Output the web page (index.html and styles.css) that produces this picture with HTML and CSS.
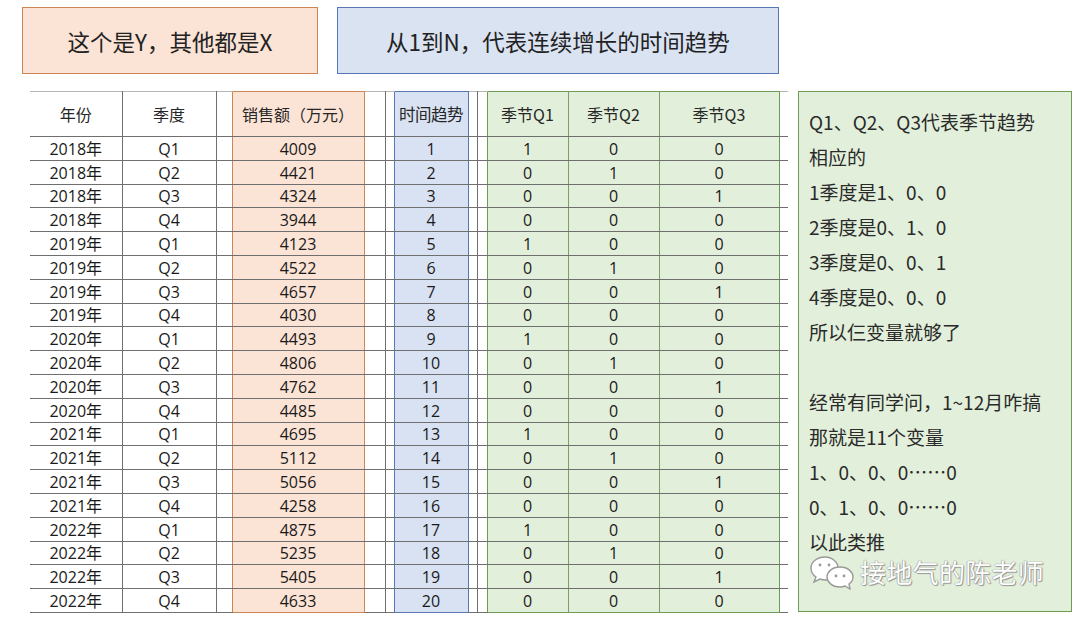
FILE: index.html
```html
<!DOCTYPE html>
<html lang="zh">
<head>
<meta charset="utf-8">
<title>季节趋势</title>
<link rel="stylesheet" href="styles.css">
</head>
<body>
<div class="page">
  <div class="notes">
    <div class="note note-y">这个是Y，其他都是X</div>
    <div class="note note-t">从1到N，代表连续增长的时间趋势</div>
  </div>
  <div class="main">
    <table class="data">
      <colgroup>
        <col class="w-c1"><col class="w-c2"><col class="w-g1"><col class="w-y"><col class="w-g2"><col class="w-g3"><col class="w-t"><col class="w-g4"><col class="w-g5"><col class="w-q1"><col class="w-q2"><col class="w-q3"><col class="w-tail">
      </colgroup>
      <thead>
        <tr><th class="c1">年份</th><th class="c2">季度</th><th></th><th class="y">销售额（万元）</th><th class="g2"></th><th></th><th class="t">时间趋势</th><th class="g4"></th><th></th><th class="q q1">季节Q1</th><th class="q q2">季节Q2</th><th class="q q3">季节Q3</th><th></th></tr>
      </thead>
      <tbody>
        <tr><td class="c1">2018年</td><td class="c2">Q1</td><td></td><td class="y">4009</td><td class="g2"></td><td></td><td class="t">1</td><td class="g4"></td><td></td><td class="q q1">1</td><td class="q q2">0</td><td class="q q3">0</td><td></td></tr>
        <tr><td class="c1">2018年</td><td class="c2">Q2</td><td></td><td class="y">4421</td><td class="g2"></td><td></td><td class="t">2</td><td class="g4"></td><td></td><td class="q q1">0</td><td class="q q2">1</td><td class="q q3">0</td><td></td></tr>
        <tr><td class="c1">2018年</td><td class="c2">Q3</td><td></td><td class="y">4324</td><td class="g2"></td><td></td><td class="t">3</td><td class="g4"></td><td></td><td class="q q1">0</td><td class="q q2">0</td><td class="q q3">1</td><td></td></tr>
        <tr><td class="c1">2018年</td><td class="c2">Q4</td><td></td><td class="y">3944</td><td class="g2"></td><td></td><td class="t">4</td><td class="g4"></td><td></td><td class="q q1">0</td><td class="q q2">0</td><td class="q q3">0</td><td></td></tr>
        <tr><td class="c1">2019年</td><td class="c2">Q1</td><td></td><td class="y">4123</td><td class="g2"></td><td></td><td class="t">5</td><td class="g4"></td><td></td><td class="q q1">1</td><td class="q q2">0</td><td class="q q3">0</td><td></td></tr>
        <tr><td class="c1">2019年</td><td class="c2">Q2</td><td></td><td class="y">4522</td><td class="g2"></td><td></td><td class="t">6</td><td class="g4"></td><td></td><td class="q q1">0</td><td class="q q2">1</td><td class="q q3">0</td><td></td></tr>
        <tr><td class="c1">2019年</td><td class="c2">Q3</td><td></td><td class="y">4657</td><td class="g2"></td><td></td><td class="t">7</td><td class="g4"></td><td></td><td class="q q1">0</td><td class="q q2">0</td><td class="q q3">1</td><td></td></tr>
        <tr><td class="c1">2019年</td><td class="c2">Q4</td><td></td><td class="y">4030</td><td class="g2"></td><td></td><td class="t">8</td><td class="g4"></td><td></td><td class="q q1">0</td><td class="q q2">0</td><td class="q q3">0</td><td></td></tr>
        <tr><td class="c1">2020年</td><td class="c2">Q1</td><td></td><td class="y">4493</td><td class="g2"></td><td></td><td class="t">9</td><td class="g4"></td><td></td><td class="q q1">1</td><td class="q q2">0</td><td class="q q3">0</td><td></td></tr>
        <tr><td class="c1">2020年</td><td class="c2">Q2</td><td></td><td class="y">4806</td><td class="g2"></td><td></td><td class="t">10</td><td class="g4"></td><td></td><td class="q q1">0</td><td class="q q2">1</td><td class="q q3">0</td><td></td></tr>
        <tr><td class="c1">2020年</td><td class="c2">Q3</td><td></td><td class="y">4762</td><td class="g2"></td><td></td><td class="t">11</td><td class="g4"></td><td></td><td class="q q1">0</td><td class="q q2">0</td><td class="q q3">1</td><td></td></tr>
        <tr><td class="c1">2020年</td><td class="c2">Q4</td><td></td><td class="y">4485</td><td class="g2"></td><td></td><td class="t">12</td><td class="g4"></td><td></td><td class="q q1">0</td><td class="q q2">0</td><td class="q q3">0</td><td></td></tr>
        <tr><td class="c1">2021年</td><td class="c2">Q1</td><td></td><td class="y">4695</td><td class="g2"></td><td></td><td class="t">13</td><td class="g4"></td><td></td><td class="q q1">1</td><td class="q q2">0</td><td class="q q3">0</td><td></td></tr>
        <tr><td class="c1">2021年</td><td class="c2">Q2</td><td></td><td class="y">5112</td><td class="g2"></td><td></td><td class="t">14</td><td class="g4"></td><td></td><td class="q q1">0</td><td class="q q2">1</td><td class="q q3">0</td><td></td></tr>
        <tr><td class="c1">2021年</td><td class="c2">Q3</td><td></td><td class="y">5056</td><td class="g2"></td><td></td><td class="t">15</td><td class="g4"></td><td></td><td class="q q1">0</td><td class="q q2">0</td><td class="q q3">1</td><td></td></tr>
        <tr><td class="c1">2021年</td><td class="c2">Q4</td><td></td><td class="y">4258</td><td class="g2"></td><td></td><td class="t">16</td><td class="g4"></td><td></td><td class="q q1">0</td><td class="q q2">0</td><td class="q q3">0</td><td></td></tr>
        <tr><td class="c1">2022年</td><td class="c2">Q1</td><td></td><td class="y">4875</td><td class="g2"></td><td></td><td class="t">17</td><td class="g4"></td><td></td><td class="q q1">1</td><td class="q q2">0</td><td class="q q3">0</td><td></td></tr>
        <tr><td class="c1">2022年</td><td class="c2">Q2</td><td></td><td class="y">5235</td><td class="g2"></td><td></td><td class="t">18</td><td class="g4"></td><td></td><td class="q q1">0</td><td class="q q2">1</td><td class="q q3">0</td><td></td></tr>
        <tr><td class="c1">2022年</td><td class="c2">Q3</td><td></td><td class="y">5405</td><td class="g2"></td><td></td><td class="t">19</td><td class="g4"></td><td></td><td class="q q1">0</td><td class="q q2">0</td><td class="q q3">1</td><td></td></tr>
        <tr class="last"><td class="c1">2022年</td><td class="c2">Q4</td><td></td><td class="y">4633</td><td class="g2"></td><td></td><td class="t">20</td><td class="g4"></td><td></td><td class="q q1">0</td><td class="q q2">0</td><td class="q q3">0</td><td></td></tr>
      </tbody>
    </table>
    <div class="explain">
      <p>Q1、Q2、Q3代表季节趋势</p>
      <p>相应的</p>
      <p>1季度是1、0、0</p>
      <p>2季度是0、1、0</p>
      <p>3季度是0、0、1</p>
      <p>4季度是0、0、0</p>
      <p>所以仨变量就够了</p>
      <p class="blank"></p>
      <p>经常有同学问，1~12月咋搞</p>
      <p>那就是11个变量</p>
      <p>1、0、0、0……0</p>
      <p>0、1、0、0……0</p>
      <p>以此类推</p>
      <div class="mark">
        <svg class="mark-icon" width="44" height="36" viewBox="0 0 44 36">
          <path d="M15 3 C7 3 1 8 1 14 C1 18 3 21 6 23 L4 28 L10 25 C12 26 14 26 16 26 C27 26 28 18 28 14 C28 8 22 3 15 3 Z" fill="#fff" stroke="#9a9a9a" stroke-width="1.4"/>
          <circle cx="10" cy="11" r="1.4" fill="#9a9a9a"/>
          <circle cx="19" cy="11" r="1.4" fill="#9a9a9a"/>
          <path d="M30 13 C22 13 17 18 17 23 C17 28 22 33 30 33 C32 33 33 33 35 32 L40 35 L39 30 C42 28 43 26 43 23 C43 18 38 13 30 13 Z" fill="#fff" stroke="#9a9a9a" stroke-width="1.4"/>
          <circle cx="26" cy="22" r="1.4" fill="#9a9a9a"/>
          <circle cx="34" cy="22" r="1.4" fill="#9a9a9a"/>
        </svg>
        <span class="mark-text">接地气的陈老师</span>
      </div>
    </div>
  </div>
</div>
</body>
</html>
```

FILE: styles.css
```css
html, body {
  margin: 0;
  padding: 0;
  background: #ffffff;
}

body {
  width: 1080px;
  height: 623px;
  overflow: hidden;
  font-family: "Noto Sans CJK SC", "Noto Sans", sans-serif;
  color: #1c1c1c;
}

.page {
  display: flex;
  flex-direction: column;
}

.notes {
  display: flex;
  gap: 19px;
  padding: 7px 0 0 22px;
}

.note {
  height: 67px;
  box-sizing: border-box;
  display: flex;
  align-items: center;
  justify-content: center;
  font-size: 22.5px;
  color: #222;
}

.note-y {
  width: 296px;
  background: #fbe3d5;
  border: 1.5px solid #cf8455;
}

.note-t {
  width: 442px;
  background: #dae3f2;
  border: 1.5px solid #5877b6;
}

.main {
  display: flex;
  align-items: flex-start;
  gap: 10px;
  margin-top: 17px;
  padding-left: 30px;
}

.data {
  border-collapse: collapse;
  table-layout: fixed;
  width: 758px;
  font-family: "Open Sans", "Noto Sans CJK SC", sans-serif;
  font-size: 16px;
  color: #1a1a1a;
}

.w-c1 { width: 92px; }
.w-c2 { width: 94px; }
.w-g1 { width: 16px; }
.w-y { width: 132px; }
.w-g2 { width: 21px; }
.w-g3 { width: 9px; }
.w-t { width: 74px; }
.w-g4 { width: 9px; }
.w-g5 { width: 10px; }
.w-q1 { width: 81px; }
.w-q2 { width: 91px; }
.w-q3 { width: 120px; }
.w-tail { width: 9px; }

.data th,
.data td {
  padding: 0;
  text-align: center;
  border-bottom: 1px solid #6f6f6f;
  white-space: nowrap;
  overflow: visible;
}

.data th {
  height: 44px;
  font-weight: 400;
  font-family: "Noto Sans CJK SC", sans-serif;
  font-size: 16px;
  border-top: 1px solid #b5b5b5;
  color: #262626;
}

.data tbody tr {
  height: 23.8px;
}

.data td {
  height: 21.8px;
  line-height: 18px;
  padding-top: 1px;
}

.data .c1,
.data .c2,
.data .g2,
.data .g4 {
  border-right: 1px solid #6f6f6f;
}

.data .y {
  background: #fbe3d5;
  border-left: 1px solid #cf8455;
  border-right: 1px solid #cf8455;
}

.data .t {
  background: #d9e2f2;
  border-left: 1px solid #5877b6;
  border-right: 1px solid #5877b6;
}

.data th.t {
  font-size: 16.5px;
  letter-spacing: -0.5px;
}

.data .q {
  background: #e2efda;
  border-right: 1px solid #7f9c6e;
}

.data .q1 {
  border-left: 1px solid #6f9c55;
}

.data .q3 {
  border-right: 1px solid #6f9c55;
}

.data th.y { border-top-color: #cf8455; }
.data th.t { border-top-color: #5877b6; }
.data th.q { border-top-color: #6f9c55; }

.data .last .y { border-bottom-color: #cf8455; }
.data .last .t { border-bottom-color: #5877b6; }
.data .last .q { border-bottom-color: #6f9c55; }

.explain {
  position: relative;
  width: 274px;
  height: 521px;
  box-sizing: border-box;
  padding: 12px 0 0 10px;
  background: #e2efda;
  border: 1.5px solid #6f9c55;
  font-size: 19px;
  line-height: 35px;
  color: #2a2a2a;
}

.explain p {
  margin: 0;
  height: 35px;
  white-space: nowrap;
}

.mark {
  position: absolute;
  left: 11px;
  top: 462px;
  display: flex;
  align-items: center;
  gap: 6px;
}

.mark-icon {
  display: block;
}

.mark-text {
  font-size: 26px;
  line-height: 30px;
  color: #ffffff;
  letter-spacing: 0.3px;
  text-shadow: 0 0 1px #8a8a8a, 0 0 1px #8a8a8a, 1px 1px 1px #9a9a9a;
}
```
